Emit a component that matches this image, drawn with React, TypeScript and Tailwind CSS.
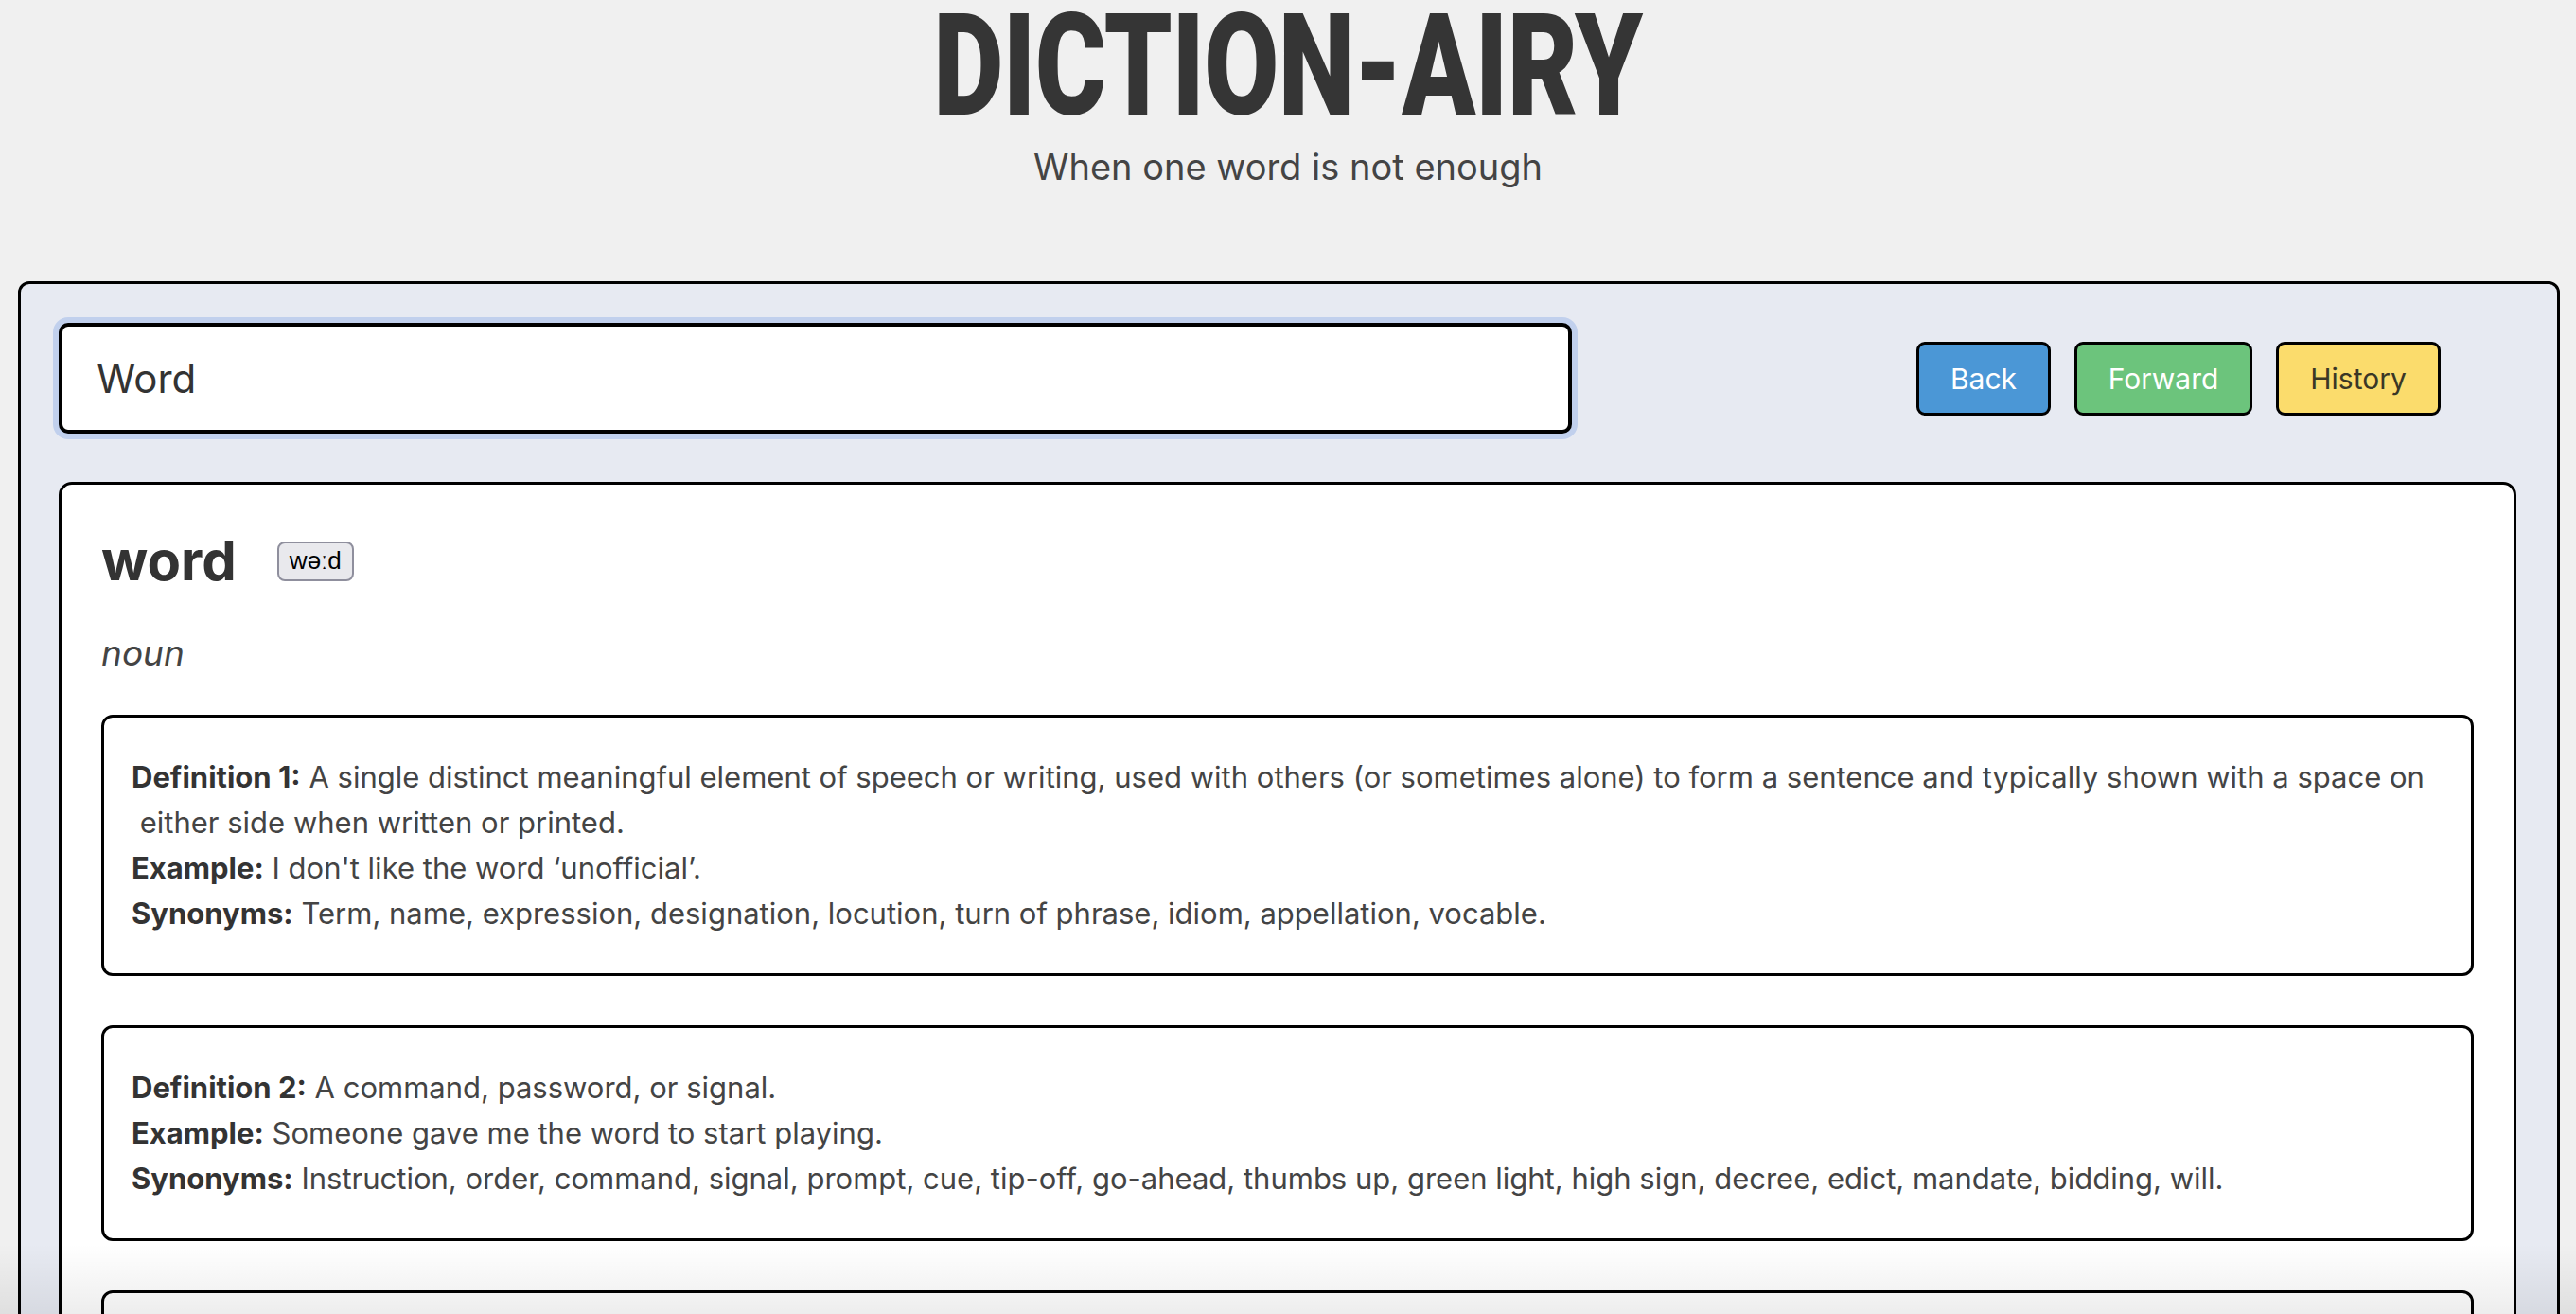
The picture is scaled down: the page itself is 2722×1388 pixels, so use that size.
import React from "react";

const defs = [
  {
    n: 1,
    line1:
      "A single distinct meaningful element of speech or writing, used with others (or sometimes alone) to form a sentence and typically shown with a space on",
    line2: "either side when written or printed.",
    example: "I don't like the word \u2018unofficial\u2019.",
    synonyms:
      "Term, name, expression, designation, locution, turn of phrase, idiom, appellation, vocable.",
  },
  {
    n: 2,
    line1: "A command, password, or signal.",
    line2: "",
    example: "Someone gave me the word to start playing.",
    synonyms:
      "Instruction, order, command, signal, prompt, cue, tip-off, go-ahead, thumbs up, green light, high sign, decree, edict, mandate, bidding, will.",
  },
];

function DefCard({ d }: { d: (typeof defs)[number] }) {
  return (
    <div className="rounded-[12px] border-[3px] border-black bg-white px-[29px] py-[39px] text-[31px] leading-[48px] text-[#444]">
      <div className="whitespace-nowrap">
        <b className="font-bold text-[#333]">Definition {d.n}:</b> {d.line1}
      </div>
      {d.line2 ? (
        <div className="whitespace-nowrap">{"\u00a0" + d.line2}</div>
      ) : null}
      <div className="whitespace-nowrap">
        <b className="font-bold text-[#333]">Example:</b> {d.example}
      </div>
      <div className="whitespace-nowrap">
        <b className="font-bold text-[#333]">Synonyms:</b> {d.synonyms}
      </div>
    </div>
  );
}

export default function App() {
  return (
    <div className="relative h-[1388px] overflow-hidden bg-[#f0f0f0] font-['Inter','Liberation_Sans',sans-serif]">
      <header className="flex flex-col items-center">
        <h1 className="origin-center scale-x-[0.76] font-['Roboto','Liberation_Sans',sans-serif] text-[151px] font-black leading-[140px] tracking-[-1px] text-[#353535]">
          DICTION-AIRY
        </h1>
        <p className="mt-[12px] text-[38px] leading-[48px] text-[#444]">
          When one word is not enough
        </p>
      </header>

      <main className="ml-[19px] mr-[17px] mt-[97px] rounded-[12px] border-[3px] border-black bg-[#e7eaf2] pl-[40px] pr-[43px] pt-[41px]">
        <div className="flex items-center justify-between">
          <div className="flex h-[117px] w-[1599px] items-center rounded-[10px] border-[4px] border-black bg-white pl-[36px] text-[42px] text-[#333] shadow-[0_0_0_6px_#c1d0ed]">
            Word
          </div>
          <div className="mr-[80px] flex gap-[25px] text-[30px]">
            <button className="h-[78px] w-[142px] rounded-[9px] border-[3px] border-black bg-[#4b97d6] pt-[2px] text-white">
              Back
            </button>
            <button className="h-[78px] w-[188px] rounded-[9px] border-[3px] border-black bg-[#6cc47c] pt-[2px] text-white">
              Forward
            </button>
            <button className="h-[78px] w-[174px] rounded-[9px] border-[3px] border-black bg-[#fbdc6c] pt-[2px] text-[#3a3726]">
              History
            </button>
          </div>
        </div>

        <section className="mt-[51px] rounded-[14px] border-[3px] border-black bg-white px-[42px] pb-[60px] pt-[52px]">
          <div className="flex items-center gap-[43px]">
            <h2 className="text-[58px] font-bold leading-[57px] text-[#333]">word</h2>
            <span className="flex h-[42px] items-center rounded-[8px] border-[2px] border-[#8f8f9d] bg-[#e9e9ed] px-[11px] font-['Liberation_Sans',sans-serif] text-[26px] text-black">
              wəːd
            </span>
          </div>
          <p className="mt-[45px] text-[37px] italic leading-[48px] text-[#444]">noun</p>
          <div className="mt-[41px] flex flex-col gap-[52px]">
            {defs.map((d) => (
              <DefCard key={d.n} d={d} />
            ))}
            <div className="h-[200px] rounded-[12px] border-[3px] border-black bg-white" />
          </div>
        </section>
      </main>

      <div className="pointer-events-none absolute bottom-0 left-0 right-0 h-[74px] bg-linear-to-b from-black/0 to-black/[0.07]" />
    </div>
  );
}
